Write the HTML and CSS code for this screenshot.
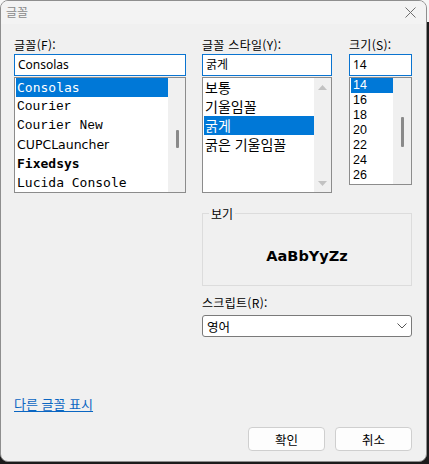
FILE: index.html
```html
<!DOCTYPE html>
<html lang="ko">
<head>
<meta charset="utf-8">
<title>글꼴</title>
<link rel="stylesheet" href="styles.css">
</head>
<body>
<div class="window">
  <div class="titlebar">
    <span class="title">글꼴</span>
    <svg class="close" width="11" height="11" viewBox="0 0 11 11"><path d="M0.5 0.5 L10.5 10.5 M10.5 0.5 L0.5 10.5" stroke="#6f6f6f" stroke-width="1" fill="none"/></svg>
  </div>
  <div class="content">
    <div class="top-row">
      <div class="col col-font">
        <div class="label">글꼴(<u>F</u>):</div>
        <div class="input">Consolas</div>
        <div class="list list-font">
          <div class="items">
            <div class="item sel mono">Consolas</div>
            <div class="item courier">Courier</div>
            <div class="item courier">Courier New</div>
            <div class="item sans">CUPCLauncher</div>
            <div class="item mono bold">Fixedsys</div>
            <div class="item mono">Lucida Console</div>
          </div>
          <div class="sbar">
            <div class="thumb thumb-font"></div>
          </div>
        </div>
      </div>
      <div class="col col-style">
        <div class="label">글꼴 스타일(<u>Y</u>):</div>
        <div class="input">굵게</div>
        <div class="list list-style">
          <div class="items">
            <div class="item kr">보통</div>
            <div class="item kr">기울임꼴</div>
            <div class="item kr sel">굵게</div>
            <div class="item kr">굵은 기울임꼴</div>
          </div>
          <div class="sbar sbar-arrows">
            <svg width="9" height="5" viewBox="0 0 9 5"><path d="M0 5 L4.5 0 L9 5 Z" fill="#c2c2c2"/></svg>
            <svg width="9" height="5" viewBox="0 0 9 5"><path d="M0 0 L4.5 5 L9 0 Z" fill="#c2c2c2"/></svg>
          </div>
        </div>
      </div>
      <div class="col col-size">
        <div class="label">크기(<u>S</u>):</div>
        <div class="input">14</div>
        <div class="list list-size">
          <div class="items">
            <div class="item num sel">14</div>
            <div class="item num">16</div>
            <div class="item num">18</div>
            <div class="item num">20</div>
            <div class="item num">22</div>
            <div class="item num">24</div>
            <div class="item num">26</div>
          </div>
          <div class="sbar">
            <div class="thumb thumb-size"></div>
          </div>
        </div>
      </div>
    </div>
    <div class="mid-row">
      <div class="spacer"></div>
      <div class="right-block">
        <div class="group">
          <div class="legend">보기</div>
          <div class="sample">AaBbYyZz</div>
        </div>
        <div class="label script-label">스크립트(<u>R</u>):</div>
        <div class="select">
          <span>영어</span>
          <svg width="10" height="6" viewBox="0 0 10 6"><path d="M0.5 0.5 L5 5 L9.5 0.5" stroke="#555" stroke-width="1" fill="none"/></svg>
        </div>
      </div>
    </div>
    <div class="link-row">
      <a class="link" href="#">다른 글꼴 표시</a>
    </div>
    <div class="btn-row">
      <div class="btn">확인</div>
      <div class="btn">취소</div>
    </div>
  </div>
</div>
</body>
</html>
```

FILE: styles.css
```css
html, body {
  margin: 0;
  padding: 0;
}
body {
  width: 429px;
  height: 464px;
  background: linear-gradient(#f6f6f6 0, #f6f6f6 22px, #1b1b1b 22px);
  font-family: "Noto Sans", "Noto Sans CJK KR", sans-serif;
  font-size: 12px;
  color: #000;
  overflow: hidden;
}
.window {
  box-sizing: border-box;
  width: 427px;
  height: 462px;
  background: #f0f0f0;
  border: 1px solid #8e8e8e;
  border-radius: 8px;
  overflow: hidden;
  display: flex;
  flex-direction: column;
}
.titlebar {
  height: 23px;
  flex: none;
  background: #f3f3f3;
  display: flex;
  align-items: center;
  justify-content: space-between;
  padding: 0 10px 1px 5px;
  box-sizing: border-box;
}
.title {
  font-family: "Noto Sans CJK KR", sans-serif;
  font-size: 12px;
  line-height: 14px;
  color: #8a8a8a;
}
.close {
  display: block;
}
.content {
  flex: 1;
  display: flex;
  flex-direction: column;
  padding: 13px 14px 0 13px;
}
.label {
  font-family: "Noto Sans CJK KR", "Noto Sans", sans-serif;
  font-size: 12px;
  line-height: 16px;
  height: 16px;
  margin-bottom: 1px;
  white-space: nowrap;
  letter-spacing: 0.3px;
}
.label u {
  text-decoration: none;
}
.top-row {
  display: flex;
  align-items: flex-start;
}
.col-font { width: 172px; }
.col-style { width: 130px; margin-left: 16px; }
.col-size { width: 63px; margin-left: 17px; }
.input {
  box-sizing: border-box;
  height: 22px;
  background: #fff;
  border: 1px solid #0a74d0;
  padding: 0 3px;
  line-height: 19px;
  font-family: "Noto Sans", "Noto Sans CJK KR", sans-serif;
  font-size: 12px;
  white-space: nowrap;
  overflow: hidden;
}
.list {
  box-sizing: border-box;
  margin-top: 1px;
  background: #fff;
  border: 1px solid #8c8c8c;
  display: flex;
  overflow: hidden;
}
.list-font { height: 116px; }
.list-style { height: 116px; }
.list-size { height: 108px; }
.items {
  flex: 1;
  padding-left: 1px;
  min-width: 0;
}
.item {
  height: 19px;
  line-height: 19px;
  padding-left: 1px;
  white-space: nowrap;
  overflow: hidden;
  font-size: 13px;
}
.item.sel {
  background: #0078d7;
  color: #fff;
}
.mono { font-family: "DejaVu Sans Mono", monospace; }
.courier { font-family: "Liberation Mono", monospace; }
.sans { font-family: "DejaVu Sans", sans-serif; font-size: 12.5px; }
.bold { font-weight: bold; }
.kr {
  font-family: "Noto Sans CJK KR", sans-serif;
  font-size: 14px;
  padding-left: 1px;
}
.num {
  height: 15px;
  line-height: 15px;
  font-family: "Liberation Sans", sans-serif;
  font-size: 12.5px;
  padding-left: 2px;
}
.sbar {
  width: 17px;
  flex: none;
  background: #f0f0f0;
  display: flex;
  flex-direction: column;
  align-items: center;
}
.thumb {
  width: 3px;
  background: #8a8a8a;
  border-radius: 1px;
}
.thumb-font {
  height: 18px;
  margin-top: 52px;
  margin-left: 1px;
}
.thumb-size {
  height: 30px;
  margin-top: 39px;
  margin-left: 1px;
}
.list-size .sbar { width: 18px; }
.sbar-arrows {
  justify-content: space-between;
  padding: 7px 0 6px;
  box-sizing: border-box;
}
.sbar-arrows svg { display: block; }
.mid-row {
  display: flex;
  margin-top: 20px;
}
.spacer { width: 188px; flex: none; }
.right-block {
  width: 210px;
  display: flex;
  flex-direction: column;
}
.group {
  box-sizing: border-box;
  height: 73px;
  border: 1px solid #dcdcdc;
  display: flex;
  flex-direction: column;
}
.legend {
  margin: -8px 0 0 6px;
  padding: 0 2px;
  width: fit-content;
  background: #f0f0f0;
  font-family: "Noto Sans CJK KR", sans-serif;
  font-size: 12px;
  line-height: 16px;
}
.sample {
  flex: 1;
  display: flex;
  align-items: center;
  justify-content: center;
  padding-top: 5px;
  font-family: "DejaVu Sans", sans-serif;
  font-weight: bold;
  font-size: 14.5px;
}
.script-label {
  margin-top: 9px;
  margin-bottom: 4px;
}
.select {
  box-sizing: border-box;
  height: 22px;
  background: #fff;
  border: 1px solid #7a7a7a;
  border-radius: 3px;
  display: flex;
  align-items: center;
  justify-content: space-between;
  padding: 0 4px 0 4px;
  font-family: "Noto Sans CJK KR", sans-serif;
  font-size: 12.5px;
}
.select svg { display: block; margin-right: 0; }
.link-row {
  margin-top: 59px;
  height: 16px;
  line-height: 16px;
}
.link {
  font-family: "Noto Sans CJK KR", sans-serif;
  font-size: 13px;
  color: #0a66c2;
  text-decoration: underline;
  text-underline-offset: 2px;
}
.btn-row {
  display: flex;
  justify-content: flex-end;
  gap: 10px;
  margin-top: 15px;
}
.btn {
  box-sizing: border-box;
  width: 77px;
  height: 24px;
  background: #fdfdfd;
  border: 1px solid #cfcfcf;
  border-radius: 4px;
  display: flex;
  align-items: center;
  justify-content: center;
  font-family: "Noto Sans CJK KR", sans-serif;
  font-size: 12.5px;
}
```
